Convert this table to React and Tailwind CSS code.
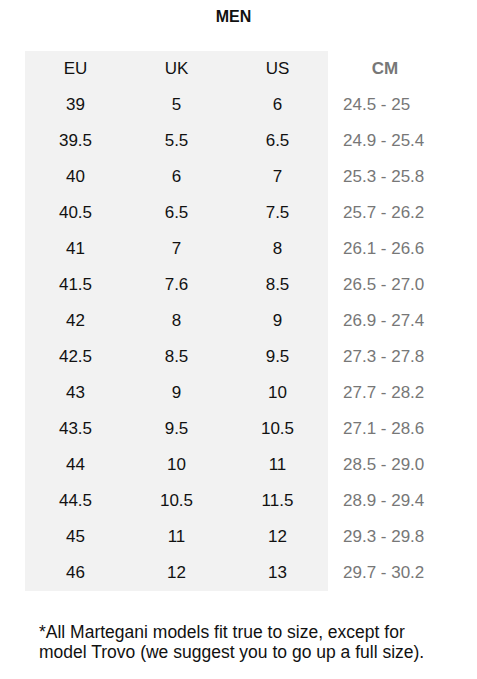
export default function App() {
  const rows = [
    ["39", "5", "6", "24.5 - 25"],
    ["39.5", "5.5", "6.5", "24.9 - 25.4"],
    ["40", "6", "7", "25.3 - 25.8"],
    ["40.5", "6.5", "7.5", "25.7 - 26.2"],
    ["41", "7", "8", "26.1 - 26.6"],
    ["41.5", "7.6", "8.5", "26.5 - 27.0"],
    ["42", "8", "9", "26.9 - 27.4"],
    ["42.5", "8.5", "9.5", "27.3 - 27.8"],
    ["43", "9", "10", "27.7 - 28.2"],
    ["43.5", "9.5", "10.5", "27.1 - 28.6"],
    ["44", "10", "11", "28.5 - 29.0"],
    ["44.5", "10.5", "11.5", "28.9 - 29.4"],
    ["45", "11", "12", "29.3 - 29.8"],
    ["46", "12", "13", "29.7 - 30.2"],
  ];

  return (
    <div className="w-[477px] h-[679px] bg-white font-['Liberation_Sans',Arial,sans-serif] text-[#111]">
      <div className="w-[417px] ml-[25px]">
        {/* Title */}
        <h1 className="h-[51px] pt-[7px] text-center text-[16px] font-bold leading-[20px]">MEN</h1>

        {/* Size table */}
        <div className="flex">
          <div className="w-[303px] bg-[#f2f2f2]">
            <div className="grid grid-cols-3 h-[36px] items-center text-center text-[17px]">
              <span>EU</span>
              <span>UK</span>
              <span>US</span>
            </div>
            {rows.map((r, i) => (
              <div key={i} className="grid grid-cols-3 h-[36px] items-center text-center text-[17px]">
                <span>{r[0]}</span>
                <span>{r[1]}</span>
                <span>{r[2]}</span>
              </div>
            ))}
          </div>
          <div className="w-[114px] text-[#777]">
            <div className="h-[36px] flex items-center justify-center text-[17px] font-bold">CM</div>
            {rows.map((r, i) => (
              <div key={i} className="h-[36px] flex items-center pl-[15px] text-[17px]">{r[3]}</div>
            ))}
          </div>
        </div>

        {/* Footnote */}
        <p className="mt-[31px] pl-[14px] text-[17.5px] leading-[20px]">
          *All Martegani models fit true to size, except for model Trovo (we suggest you to go up a full size).
        </p>
      </div>
    </div>
  );
}
